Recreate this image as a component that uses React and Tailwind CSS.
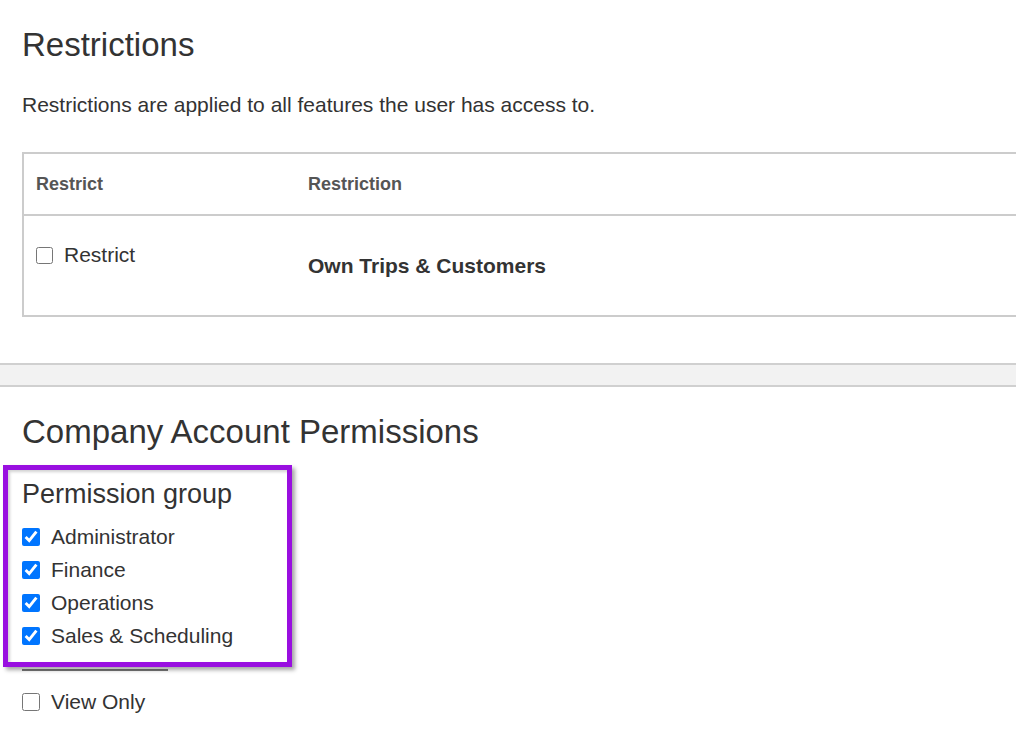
import React from "react";

function Check({ checked, label }) {
  return (
    <label className="flex items-center gap-[11px] h-[33px]">
      <input
        type="checkbox"
        defaultChecked={checked}
        className="m-0 w-[18px] h-[18px] accent-[#0075ff]"
      />
      <span>{label}</span>
    </label>
  );
}

export default function App() {
  const groups = ["Administrator", "Finance", "Operations", "Sales & Scheduling"];

  return (
    <div className="relative w-[1016px] h-[738px] overflow-hidden bg-white text-[#333] text-[21px] leading-[24px] font-['Liberation_Sans',Arial,sans-serif]">
      {/* Restrictions */}
      <section className="pl-[22px] pt-[27px]">
        <h2 className="text-[33px] leading-[36px] font-normal">Restrictions</h2>
        <p className="mt-[28px] leading-[28px]">
          Restrictions are applied to all features the user has access to.
        </p>

        <div className="mt-[33px] w-[1040px] border-2 border-[#ccc]">
          <div className="flex h-[62px] items-center border-b-2 border-[#ccc] text-[18px] font-bold text-[#555]">
            <div className="w-[284px] pl-[12px]">Restrict</div>
            <div>Restriction</div>
          </div>
          <div className="flex h-[99px]">
            <div className="w-[284px] pl-[12px] pt-[27px]">
              <label className="flex items-center gap-[11px] h-[24px]">
                <input type="checkbox" className="m-0 w-[17px] h-[17px] accent-[#0075ff]" />
                <span>Restrict</span>
              </label>
            </div>
            <div className="flex items-center font-bold text-[21px]">Own Trips &amp; Customers</div>
          </div>
        </div>
      </section>

      {/* Divider band */}
      <div className="mt-[46px] h-[24px] bg-[#f2f2f2] border-y-2 border-[#d0d0d0]" />

      {/* Company Account Permissions */}
      <section className="pl-[22px] pt-[27px]">
        <h2 className="text-[33px] leading-[36px] font-normal">Company Account Permissions</h2>
        <h3 className="mt-[29px] text-[27px] leading-[30px] font-normal">Permission group</h3>
        <div className="mt-[11px]">
          {groups.map((g) => (
            <Check key={g} checked label={g} />
          ))}
        </div>
        <div className="mt-[17px] w-[146px] h-[2px] bg-[#777]" />
        <div className="mt-[14px]">
          <Check checked={false} label="View Only" />
        </div>
      </section>

      {/* Highlight annotation */}
      <div className="absolute left-[3px] top-[465px] w-[289px] h-[202px] border-[5px] border-[#990fe0] shadow-[3px_3px_4px_rgba(0,0,0,0.35),inset_2px_2px_3px_rgba(0,0,0,0.18)]" />
    </div>
  );
}
